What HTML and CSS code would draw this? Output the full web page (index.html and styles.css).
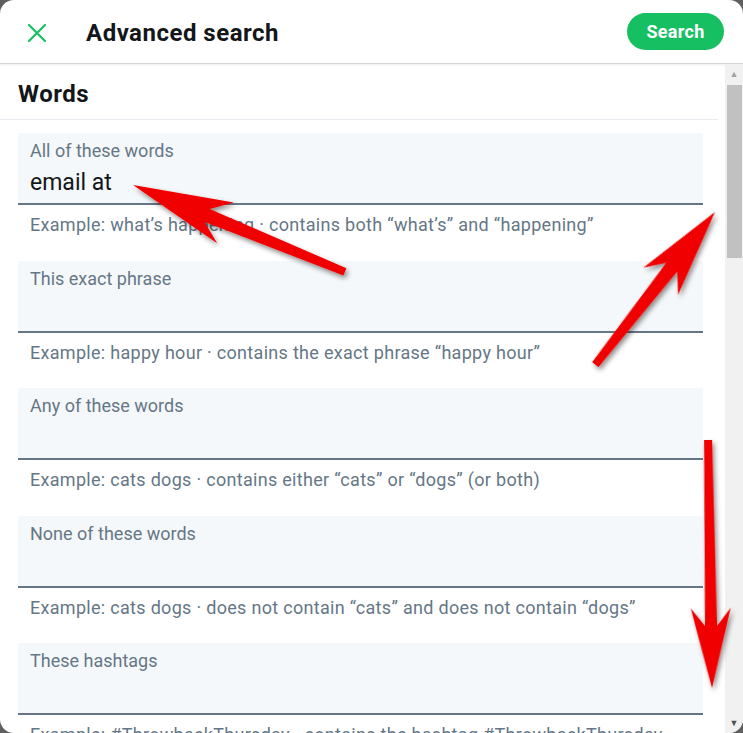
FILE: index.html
```html
<!DOCTYPE html>
<html lang="en">
<head>
    <meta charset="UTF-8">
    <meta name="viewport" content="width=device-width, initial-scale=1.0">
    <title>Advanced search</title>
    <link rel="stylesheet" href="styles.css">
</head>
<body>

    <div class="modal">

        <!-- Header -->
        <div class="modal-header">
            <button class="close-btn" aria-label="Close">
                <svg width="20" height="20" viewBox="0 0 20 20">
                    <path d="M2 2 L18 18 M18 2 L2 18" stroke="#17bf63" stroke-width="2.2" fill="none" stroke-linecap="round"/>
                </svg>
            </button>
            <h1>Advanced search</h1>
            <button class="search-btn">Search</button>
        </div>

        <!-- Body -->
        <div class="modal-body">
            <div class="content">
                <h2 class="section-title">Words</h2>

                <div class="field-group">
                    <div class="field">
                        <span class="field-label">All of these words</span>
                        <span class="field-value">email at</span>
                    </div>
                    <p class="hint">Example: what’s happening · contains both “what’s” and “happening”</p>
                </div>

                <div class="field-group">
                    <div class="field">
                        <span class="field-label">This exact phrase</span>
                    </div>
                    <p class="hint">Example: happy hour · contains the exact phrase “happy hour”</p>
                </div>

                <div class="field-group">
                    <div class="field">
                        <span class="field-label">Any of these words</span>
                    </div>
                    <p class="hint">Example: cats dogs · contains either “cats” or “dogs” (or both)</p>
                </div>

                <div class="field-group">
                    <div class="field">
                        <span class="field-label">None of these words</span>
                    </div>
                    <p class="hint">Example: cats dogs · does not contain “cats” and does not contain “dogs”</p>
                </div>

                <div class="field-group">
                    <div class="field">
                        <span class="field-label">These hashtags</span>
                    </div>
                    <p class="hint">Example: #ThrowbackThursday · contains the hashtag #ThrowbackThursday</p>
                </div>
            </div>

            <!-- Scrollbar -->
            <div class="scrollbar">
                <span class="scroll-arrow">&#9650;</span>
                <div class="scroll-track">
                    <div class="scroll-thumb"></div>
                </div>
                <span class="scroll-arrow">&#9660;</span>
            </div>
        </div>

        <!-- Red annotation arrows -->
        <svg class="arrows" width="743" height="733" viewBox="0 0 743 733">
            <defs>
                <filter id="shadow" x="-20%" y="-20%" width="140%" height="140%">
                    <feDropShadow dx="2" dy="3" stdDeviation="2.5" flood-color="#000" flood-opacity="0.45"/>
                </filter>
            </defs>
            <g fill="#f00000" filter="url(#shadow)">
                <polygon transform="translate(133,185) rotate(-157.7)" points="0,0 -100,-22 -80,-7 -229,-4 -229,4 -80,7 -100,22"/>
                <polygon transform="translate(715,212) rotate(-51.9)" points="0,0 -88,-22 -70,-7 -194,-4 -194,4 -70,7 -88,22"/>
                <polygon transform="translate(712,688) rotate(89.1)" points="0,0 -80,-20 -62,-6 -248,-4 -248,4 -62,6 -80,20"/>
            </g>
        </svg>
    </div>

</body>
</html>
```

FILE: styles.css
```css
html, body {
    margin: 0;
    padding: 0;
}

body {
    background: #5f5f5f;
    font-family: Roboto, "Noto Sans", sans-serif;
    color: #14171a;
    width: 743px;
    height: 733px;
    overflow: hidden;
}

.modal {
    position: relative;
    width: 743px;
    height: 733px;
    background: #fff;
    border-radius: 14px;
    overflow: hidden;
    display: flex;
    flex-direction: column;
}

.modal-header {
    height: 64px;
    flex-shrink: 0;
    display: flex;
    align-items: center;
    padding: 0 19px 0 26px;
    border-bottom: 1px solid #d4d4d4;
    box-shadow: 0 1px 2px rgba(0, 0, 0, 0.08);
    box-sizing: border-box;
}

.close-btn {
    background: none;
    border: none;
    padding: 0;
    width: 22px;
    height: 22px;
    margin-top: 2px;
    display: flex;
    align-items: center;
    justify-content: center;
}

.modal-header h1 {
    margin: 2px 0 0 38px;
    font-size: 24px;
    font-weight: 700;
    letter-spacing: 0.5px;
    flex: 1;
}

.search-btn {
    background: #17bf63;
    color: #fff;
    border: none;
    border-radius: 20px;
    width: 97px;
    height: 37px;
    font-family: Roboto, "Noto Sans", sans-serif;
    font-size: 18px;
    font-weight: 700;
    letter-spacing: 0.3px;
}

.modal-body {
    flex: 1;
    display: flex;
    min-height: 0;
}

.content {
    flex: 1;
    overflow: hidden;
}

.section-title {
    margin: 0 7px 0 0;
    padding: 0 18px;
    height: 55px;
    line-height: 60px;
    font-size: 24px;
    font-weight: 700;
    letter-spacing: 0.5px;
    border-bottom: 1px solid #e6ecf0;
}

.field-group {
    padding: 0 22px 0 18px;
}

.field-group:first-of-type {
    margin-top: 13px;
}

.field {
    background: #f5f8fa;
    border-bottom: 2px solid #657786;
    border-radius: 2px 2px 0 0;
    padding: 6px 12px 0;
    display: flex;
    flex-direction: column;
    height: 64px;
}

.field-label {
    font-size: 18px;
    line-height: 24px;
    color: #657786;
}

.field-value {
    font-size: 23px;
    line-height: 40px;
    color: #14171a;
}

.hint {
    margin: 0;
    padding: 7px 12px 0;
    height: 48.5px;
    font-size: 18px;
    letter-spacing: 0.3px;
    line-height: 25px;
    color: #657786;
    white-space: nowrap;
}

.scrollbar {
    width: 18px;
    flex-shrink: 0;
    background: #f1f1f1;
    display: flex;
    flex-direction: column;
    align-items: center;
}

.scroll-arrow {
    font-size: 9px;
    color: #a3a3a3;
    height: 20px;
    line-height: 20px;
}

.scroll-arrow:last-child {
    color: #505050;
}

.scroll-track {
    flex: 1;
    width: 100%;
    display: flex;
    justify-content: center;
}

.scroll-thumb {
    width: 15px;
    height: 173px;
    margin-top: 1px;
    background: #c1c1c1;
}

.arrows {
    position: absolute;
    left: 0;
    top: 0;
    pointer-events: none;
}
```
